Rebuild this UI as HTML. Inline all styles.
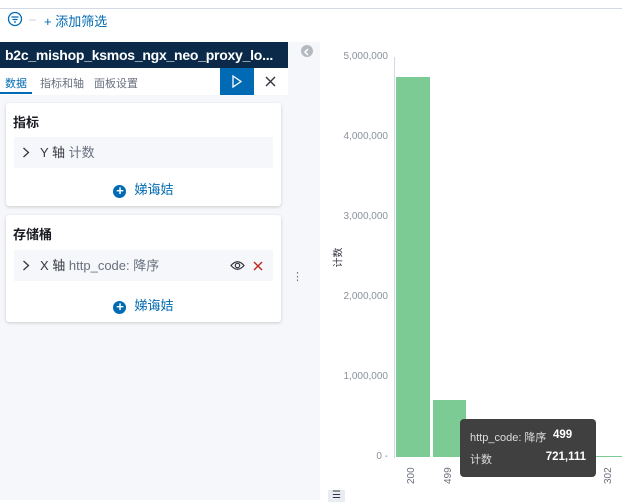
<!DOCTYPE html><html><head><meta charset="utf-8"><style>
body{margin:0;width:622px;height:500px;overflow:hidden;background:#fff;font-family:"Liberation Sans","Noto Sans CJK SC",sans-serif;position:relative}
.a{position:absolute}
.card{position:absolute;left:6px;width:275px;background:#fff;border-radius:3px;box-shadow:0 1px 3px rgba(0,0,0,.18)}
.row{position:absolute;left:8px;right:8px;background:#f5f7fa;font-size:13px;color:#343741}
.plus{display:inline-block;width:13px;height:13px;border-radius:50%;background:#006bb4;color:#fff;font-size:13px;line-height:12px;text-align:center;font-weight:bold;vertical-align:-1px;margin-right:8px}
.yl{position:absolute;right:234px;font-size:10px;color:#8a919e;text-align:right}
.xl{position:absolute;font-size:10px;color:#69707d;transform:rotate(-90deg);transform-origin:left top}
.chev{position:absolute;left:8px;top:10px}
</style></head><body>
<div class="a" style="left:0;top:0;width:622px;height:8px;border-bottom:1px solid #d3dae6"></div>
<svg class="a" style="left:7px;top:11px" width="16" height="16"><circle cx="8" cy="8" r="6.5" fill="none" stroke="#006bb4" stroke-width="1.3"/><path d="M4.5 6h7M5.5 8.5h5M7 11h2" stroke="#006bb4" stroke-width="1.2"/></svg>
<div class="a" style="left:29px;top:12px;font-size:12px;color:#c2c7cf">–</div>
<div class="a" style="left:44px;top:11px;font-size:13px;color:#006bb4">+ 添加筛选</div>
<div class="a" style="left:0;top:42px;width:320px;height:458px;background:#f5f7fa"></div>
<div class="a" style="left:0;top:42px;width:288px;height:26px;background:#0b2a4a;color:#fff;font-weight:bold;font-size:14px;letter-spacing:-0.25px;line-height:27px;padding-left:5px;box-sizing:border-box;white-space:nowrap;overflow:hidden">b2c_mishop_ksmos_ngx_neo_proxy_lo...</div>
<div class="a" style="left:0;top:68px;width:288px;height:27px;background:#fff"></div>
<div class="a" style="left:5px;top:75px;font-size:11px;color:#006bb4">数据</div>
<div class="a" style="left:0;top:92px;width:32px;height:2px;background:#006bb4"></div>
<div class="a" style="left:40px;top:75px;font-size:11px;color:#69707d">指标和轴</div>
<div class="a" style="left:94px;top:75px;font-size:11px;color:#69707d">面板设置</div>
<div class="a" style="left:220px;top:68px;width:34px;height:27px;background:#006bb4"><svg width="34" height="27"><path d="M13 8 L21 13.5 L13 19 Z" fill="none" stroke="#fff" stroke-width="1.3"/></svg></div>
<svg class="a" style="left:265px;top:76px" width="11" height="11"><path d="M1 1L10 10M10 1L1 10" stroke="#343741" stroke-width="1.4"/></svg>
<div class="card" style="top:103px;height:103px">
<div class="a" style="left:7px;top:9px;font-weight:bold;font-size:13px;color:#1a1c21">指标</div>
<div class="row" style="top:34px;height:31px;line-height:31px"><svg class="chev" width="8" height="11"><path d="M1.5 1L6.5 5.5L1.5 10" fill="none" stroke="#343741" stroke-width="1.3"/></svg><span style="margin-left:26px">Y 轴 </span><span style="color:#69707d">计数</span></div>
<div class="a" style="left:0;right:0;top:76px;text-align:center;font-size:13px;color:#006bb4"><span class="plus">+</span>娣诲姞</div></div>
<div class="card" style="top:215px;height:107px">
<div class="a" style="left:7px;top:9px;font-weight:bold;font-size:13px;color:#1a1c21">存储桶</div>
<div class="row" style="top:35px;height:31px;line-height:31px"><svg class="chev" width="8" height="11"><path d="M1.5 1L6.5 5.5L1.5 10" fill="none" stroke="#343741" stroke-width="1.3"/></svg><span style="margin-left:26px">X 轴 </span><span style="color:#69707d">http_code: 降序</span>
<svg class="a" style="right:28px;top:10px" width="15" height="11"><path d="M1 5.5Q7.5 -2 14 5.5Q7.5 13 1 5.5Z" fill="none" stroke="#343741" stroke-width="1.2"/><circle cx="7.5" cy="5.5" r="2.2" fill="none" stroke="#343741" stroke-width="1.2"/></svg>
<svg class="a" style="right:10px;top:11px" width="10" height="10"><path d="M1 1L9 9M9 1L1 9" stroke="#bd271e" stroke-width="1.4"/></svg></div>
<div class="a" style="left:0;right:0;top:80px;text-align:center;font-size:13px;color:#006bb4"><span class="plus">+</span>娣诲姞</div></div>
<div class="a" style="left:292px;top:270px;font-size:11px;color:#69707d">⋮</div>
<div class="a" style="left:301px;top:45px;width:12px;height:12px;border-radius:50%;background:#b5bac2"><svg width="12" height="12"><path d="M7 3L4 6L7 9" fill="none" stroke="#fff" stroke-width="1.5"/></svg></div>
<div class="a" style="left:327px;top:250px;font-size:10px;color:#343741;transform:rotate(-90deg)">计数</div>
<div class="yl" style="top:51px">5,000,000</div>
<div class="yl" style="top:131px">4,000,000</div>
<div class="yl" style="top:211px">3,000,000</div>
<div class="yl" style="top:291px">2,000,000</div>
<div class="yl" style="top:371px">1,000,000</div>
<div class="yl" style="top:451px">0 -</div>
<div class="a" style="left:394px;top:57px;width:1px;height:401px;background:#d3dae6"></div>
<div class="a" style="left:396px;top:77px;width:34px;height:380px;background:#7dcb94"></div>
<div class="a" style="left:433px;top:400px;width:33px;height:57px;background:#7dcb94"></div>
<div class="a" style="left:596px;top:456px;width:26px;height:1px;background:#7dcb94"></div>
<div class="xl" style="left:406px;top:484px">200</div>
<div class="xl" style="left:443px;top:484px">499</div>
<div class="xl" style="left:603px;top:484px">302</div>
<div class="a" style="left:460px;top:419px;width:136px;height:58px;background:#404040;border-radius:4px;color:#fff;font-size:11px">
<div class="a" style="left:10px;top:10px;color:#ddd">http_code: 降序</div><div class="a" style="left:93px;top:10px;font-weight:bold;font-size:11.5px">499</div>
<div class="a" style="left:10px;top:32px;color:#ddd">计数</div><div class="a" style="right:10px;top:32px;font-weight:bold;font-size:11.5px">721,111</div></div>
<div class="a" style="left:328px;top:490px;width:17px;height:12px;background:#e9edf3;font-size:10px;text-align:center;color:#343741">☰</div>
</body></html>
